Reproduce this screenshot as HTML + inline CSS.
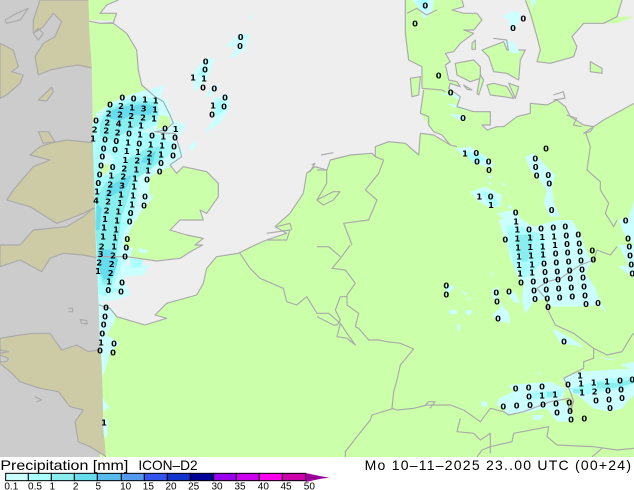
<!DOCTYPE html>
<html><head><meta charset="utf-8"><title>Precipitation ICON-D2</title>
<style>
html,body{margin:0;padding:0;background:#fff;width:634px;height:490px;overflow:hidden}
svg{display:block}
.b{fill:none;stroke:#aaa;stroke-width:3.5;stroke-linejoin:round}
.l text,text.l{font:bold 25px "DejaVu Sans",sans-serif;fill:#000;text-anchor:middle;dominant-baseline:central}
.a{fill:#ccffff}.m{fill:#aaffff}.c{fill:#88eeee}.d{fill:#66ddee}
</style></head><body>
<svg width="634" height="490" viewBox="0 0 1902 1470" xmlns="http://www.w3.org/2000/svg">
<defs>
<clipPath id="dom"><polygon points="0,0 265,0 268,100 275,200 277,300 278,420 285,600 288,735 295,885 300,1035 305,1085 308,1185 310,1285 318,1371 0,1371"/></clipPath>
<clipPath id="map"><rect width="1902" height="1371"/></clipPath>
<clipPath id="nd"><polygon points="265,0 1902,0 1902,1371 318,1371 310,1285 308,1185 305,1085 300,1035 295,885 288,735 285,600 278,420 277,300 275,200 268,100"/></clipPath>
</defs>
<g clip-path="url(#map)">
<rect width="1902" height="1371" fill="#ccffaa"/>
<!-- North Sea / Channel -->
<polygon fill="#eeeeee" points="355,0 1216,0 1216,100 1226,180 1266,200 1266,265 1271,270 1261,340 1286,375 1301,395 1326,405 1351,435 1371,440 1301,405 1261,400 1256,465 1216,430 1166,425 1126,440 1126,470 1116,460 1051,465 991,480 981,510 945,500 920,520 910,580 870,640 825,680 860,700 800,720 765,735 715,760 650,770 620,805 610,850 590,885 500,910 465,945 500,955 435,975 350,950 330,925 300,910 270,905 270,770 380,770 470,783 540,775 580,750 608,735 585,735 610,715 560,705 510,690 540,660 610,660 600,630 620,640 655,590 655,550 620,515 550,500 530,520 510,495 545,470 540,450 525,400 500,400 465,395 495,390 520,370 510,345 490,305 465,290 425,255 415,210 410,150 380,100 340,70 300,70 250,60 250,60 340,62 350,40 300,40 320,15"/>
<!-- Baltic -->
<polygon fill="#eeeeee" points="1386,0 1391,20 1356,30 1391,40 1431,40 1446,60 1421,90 1391,90 1421,100 1381,130 1361,155 1336,160 1351,185 1336,195 1341,215 1346,240 1371,245 1381,260 1351,250 1346,265 1381,290 1371,320 1421,335 1471,335 1471,375 1446,375 1461,390 1491,380 1511,380 1551,350 1591,340 1591,310 1641,315 1671,300 1696,320 1711,350 1751,375 1781,380 1771,395 1751,400 1811,360 1902,310 1902,50 1851,70 1811,70 1751,70 1716,110 1731,140 1721,170 1651,190 1611,185 1621,150 1611,110 1591,40 1576,0"/>
<polygon fill="#eeeeee" points="1866,0 1902,0 1902,50 1851,50"/>
<!-- Danish islands -->
<g class="b" style="fill:#ccffaa">
<polygon points="1366,190 1421,180 1441,200 1441,235 1411,245 1371,225"/>
<polygon points="1446,150 1511,125 1521,150 1576,150 1561,180 1556,240 1521,220 1481,215 1466,170"/>
<polygon points="1461,255 1481,250 1521,260 1541,295 1511,290 1471,285"/>
<polygon points="1526,250 1556,260 1546,295"/>
<polygon points="1771,185 1806,205 1806,220 1771,215"/>
<polygon points="1416,130 1426,120 1426,148 1416,148"/>
<polygon points="1441,225 1451,240 1436,285 1431,280"/>
<polygon points="1391,255 1416,270 1401,268"/>
<polygon points="1231,235 1261,230 1256,285 1236,290"/>
</g>
<!-- Out-of-domain grey + tan -->
<g clip-path="url(#dom)">
<rect width="300" height="1371" fill="#cccccc"/>
<g fill="#cdcaa6" stroke="#aaa" stroke-width="3.5" stroke-linejoin="round">
<polygon points="120,0 100,60 100,100 130,80 160,40 185,65 165,110 130,130 105,170 115,225 150,210 200,200 235,195 280,205 300,205 300,0"/>
<polygon points="0,130 40,150 55,200 35,215 70,225 60,250 20,285 0,295"/>
<polygon points="300,430 200,420 150,430 120,440 90,465 150,480 100,500 40,570 20,600 90,620 170,670 200,660 250,640 280,625 300,625"/>
<polygon points="0,735 60,735 100,690 200,680 250,650 280,625 300,625 300,775 250,765 190,760 150,775 125,815 60,780 0,800"/>
<polygon points="0,1015 60,1005 100,1000 150,1000 185,1050 230,1035 265,1055 320,1045 320,1371 270,1340 235,1325 225,1265 250,1230 210,1220 175,1175 120,1165 60,1145 30,1115 0,1090"/>
</g>
<g class="b">
<polyline points="15,60 50,40 85,25 60,60 20,70 15,60"/>
<polyline points="100,100 115,85 130,100 115,120 100,100"/>
<polygon points="115,300 155,262 160,275 140,303" fill="#cdcaa6"/>
<polygon points="115,395 145,395 165,425 130,430" fill="#cdcaa6"/>
<polyline points="205,925 218,925 218,935 205,935"/>
<polyline points="240,958 260,962 262,972 245,970 240,958"/>
<polyline points="0,1050 25,1055 0,1060"/>
<polyline points="105,1190 125,1200 110,1205"/>
<polygon points="0,1065 25,1075 20,1085 0,1085" fill="#cccccc"/>
</g>
</g>
<!-- precipitation (sea+land) -->
<g clip-path="url(#nd)">
<polygon class="a" points="280,370 290,340 340,305 400,280 460,265 495,255 480,290 500,300 520,360 560,375 530,420 555,460 520,495 450,530 445,580 460,590 420,640 390,690 370,735 400,745 390,775 380,795 450,795 430,825 370,830 390,885 350,900 300,905 340,925 345,960 320,1005 360,1030 330,1055 320,1095 305,1135 295,1000 280,800"/>
<polygon fill="#ccffaa" points="478,345 508,350 512,378 470,388"/>
<polygon class="a" points="305,1190 330,1225 320,1225 310,1235"/>
<polygon class="a" points="305,1245 325,1265 320,1315 310,1305"/>
<polygon class="a" points="415,745 440,748 440,760 420,758"/>
<polygon class="a" points="565,440 590,420 585,440 575,455"/>
<polygon class="m" points="280,375 330,315 410,290 470,295 478,340 468,375 420,395 480,405 530,440 480,490 420,520 410,590 400,650 370,700 360,760 365,790 340,860 360,870 310,890 295,880 280,700"/>
<polygon class="m" points="390,775 430,780 425,800 395,805"/>
<polygon class="a" points="296,468 330,458 342,478 326,520 300,532"/>
<polygon fill="#ccffaa" points="302,498 325,490 330,510 305,528"/>
<polygon class="c" points="300,370 330,325 400,305 470,305 475,345 420,375 380,395 340,420 300,410"/>
<polygon class="c" points="380,480 440,445 480,440 490,470 450,510 400,540 385,590 365,650 345,795 335,850 310,855 295,815 290,735 285,660 290,590 320,545 370,510"/>
<polygon class="d" points="335,330 380,318 440,312 468,322 450,345 400,345 360,362 330,355"/>
<polygon class="d" points="432,470 468,453 458,488 422,488"/>
<polygon class="d" points="325,560 370,535 395,525 378,565 340,585 315,595"/>
<polygon class="d" points="290,610 305,625 298,690 288,690"/>
<polygon class="d" points="295,745 335,750 355,780 340,830 312,840 297,805"/>
<!-- north sea blobs -->
<polygon class="a" points="750,50 765,42 745,62"/>
<polygon class="a" points="675,140 720,100 750,105 735,150 685,180 710,140"/>
<polygon class="a" points="575,225 615,175 645,175 620,240 585,275"/>
<polygon class="m" points="600,205 625,200 610,230 595,225"/>
<polygon class="a" points="615,290 640,255 660,255 630,290"/>
<polygon class="a" points="610,400 640,360 640,295 685,280 690,320 660,370"/>
<polygon class="m" points="645,305 675,300 670,335 645,350"/>
<!-- denmark / germany blobs z2 -->
<g transform="translate(951,0)">
<polygon class="a" points="285,0 350,0 345,40 320,55 310,30"/>
<polygon class="m" points="300,0 335,0 330,30 315,30"/>
<polygon class="a" points="640,0 658,0 645,25"/>
<polygon class="a" points="555,50 580,35 605,35 610,50 600,75 580,100 575,60"/>
<polygon class="a" points="560,120 590,125 610,160 580,158"/>
<polygon class="a" points="365,280 425,280 430,305 410,290"/>
<polygon class="a" points="390,310 420,315 450,325 405,320"/>
<polygon class="a" points="395,342 440,345 450,360 430,362"/>
<polygon class="a" points="415,445 460,440 500,465 530,490 525,505 490,495 450,470 430,460"/>
<polygon class="m" points="440,455 480,460 510,480 470,490"/>
<polygon class="a" points="625,470 650,460 680,490 715,525 705,560 710,610 730,650 700,650 680,610 690,570 665,535 640,510"/>
<polygon class="a" points="460,575 505,560 555,585 550,620 520,625 480,600"/>
<polygon class="m" points="490,570 530,585 545,615 520,620"/>
<polygon class="a" points="510,525 525,530 520,540"/>
<polygon class="a" points="550,548 565,552 560,560"/>
<polygon class="a" points="510,545 525,548 520,555"/>
<polygon class="a" points="572,610 590,625 575,625"/>
<polygon class="a" points="540,640 590,630 610,650 570,665"/>
</g>
<g transform="translate(951,735)">
<polygon class="a" points="545,-75 600,-85 650,-55 720,-75 765,-75 790,-35 800,0 825,50 805,85 835,130 850,170 870,205 845,180 800,185 700,185 690,160 650,170 625,205 615,165 620,120 600,90 580,40 570,0"/>
<polygon class="m" points="570,-60 610,-55 680,-30 685,40 650,80 620,100 590,60 575,0"/>
<polygon class="c" points="600,-30 650,-30 640,25 620,40 600,20"/>
<polygon class="c" points="610,30 640,25 630,50 615,50"/>
<polygon class="a" points="905,-75 935,-85 951,-135 951,0 920,-35"/>
<polygon class="a" points="905,0 951,0 951,100 905,65 935,60"/>
<polygon class="a" points="385,120 415,125 390,150"/>
<polygon class="a" points="430,135 450,145 445,152"/>
<polygon class="a" points="450,158 462,160 458,168"/>
<polygon class="a" points="395,195 420,195 420,208 395,208"/>
<polygon class="a" points="445,195 465,195 460,212 445,205"/>
<polygon class="a" points="420,238 430,238 428,258 422,258"/>
<polygon class="a" points="525,135 545,125 545,165 575,205 580,235 545,230 525,210 555,185 530,160"/>
<polygon class="a" points="570,130 595,145 610,175 590,170 575,150"/>
<polygon class="a" points="705,250 735,265 780,290 800,308 770,300 730,295"/>
<polygon class="a" points="520,80 530,85 528,95"/>
<polygon class="a" points="840,335 900,345 880,345"/>
<polygon class="a" points="910,360 951,350 951,375"/>
<polygon class="a" points="660,382 672,384 668,390"/>
<polygon class="a" points="575,420 700,410 745,430 735,465 760,490 770,530 720,530 690,490 640,500 580,510 540,480 545,460 590,440"/>
<polygon class="a" points="735,400 790,380 951,370 951,450 930,470 915,490 880,500 830,490 780,450 755,440"/>
<polygon class="a" points="490,470 510,470 510,485 495,485"/>
<polygon class="a" points="645,510 680,510 670,525 650,525"/>
<polygon class="m" points="640,440 690,440 740,435 730,455 640,465"/>
<polygon class="m" points="760,430 830,410 880,400 951,395 930,430 860,440 800,450"/>
<polygon class="c" points="840,410 900,415 951,400 951,415 880,430 840,430"/>
<polygon class="c" points="765,432 800,430 795,445 770,445"/>
<polygon class="c" points="690,440 715,440 705,455 690,455"/>
</g>
</g>
<!-- coast + borders -->
<g clip-path="url(#nd)">
<polyline class="b" points="355,0 320,15 300,40 350,40 340,68 300,70 250,60 300,70 340,70 380,100 410,150 415,210 425,255 465,290 490,305 510,345 520,370 495,390 465,395 500,400 525,400 540,450 545,470 510,495 530,520 550,500 620,515 655,550 655,590 620,640 600,630 610,660 540,660 510,690 560,705 610,715 585,735 608,735 580,750 540,775 470,783 380,770 290,770"/>
<polyline class="b" points="280,910 330,925 350,950 435,975 500,955 465,945 500,910 590,885 610,850 620,805 650,770 715,760 765,735 800,720 860,700 825,680 870,640 910,580 920,520 945,500 981,510 991,480 1051,465 1116,460 1126,470 1126,440 1166,425 1216,430 1256,465 1261,400 1301,405 1351,435 1371,440"/>
<polyline class="b" points="1216,0 1216,100 1226,180 1266,200 1266,265 1326,270 1336,275"/>
<polyline class="b" points="1271,270 1261,340 1286,350 1286,375 1301,395 1326,405 1351,435"/>
<polyline class="b" points="1386,0 1391,20 1356,30 1391,40 1431,40 1446,60 1421,90 1391,90 1421,100 1381,130 1361,155 1336,160 1351,185 1336,195 1341,215 1346,240 1371,245 1381,260 1351,250 1346,265 1381,290 1371,320 1421,335 1471,335 1471,375 1446,375 1461,390 1491,380 1511,380 1551,350 1591,340 1591,310 1641,315 1671,300 1696,320 1711,350 1751,375 1781,380 1771,395 1751,400 1811,360 1902,310"/>
<polyline class="b" points="1576,0 1591,40 1611,110 1621,150 1611,185 1651,190 1721,170 1731,140 1716,110 1751,70 1811,70 1851,50 1866,0"/>
<polyline class="b" points="1221,40 1250,25 1280,45 1310,30"/>
<polyline class="b" points="1480,115 1520,120 1525,150"/>
<polyline class="b" points="1660,285 1690,275 1695,295 1660,300"/>
<polyline class="b" points="1700,345 1730,355 1720,375 1745,380"/>
<polyline class="b" points="935,495 945,490 930,515 925,515"/>
<polyline class="b" points="950,600 1000,575 1020,575 1000,600 970,615 950,600"/>
<polyline class="b" points="951,510 980,510 980,550 951,600"/>
<polyline class="b" points="963,465 1000,458"/>
<polyline class="b" points="800,700 870,690 860,720 800,720"/>
<polyline class="b" points="830,680 870,670 875,690"/>
<polyline class="b" points="1126,470 1151,480 1136,520 1096,570 1131,600 1106,660 1031,670 1056,735"/>
<polyline class="b" points="1756,395 1771,440 1761,510 1801,545 1801,570 1826,610 1816,640 1841,680 1851,660"/>
<polyline class="b" points="720,760 750,805 780,835 850,865 860,905 890,915 920,890 951,940 986,940 1021,970 1011,1010 1041,1015 1066,1035 1041,1000 1021,970"/>
<polyline class="b" points="1051,735 1021,775 996,805 1036,810 1066,850 1041,885 1041,915 1076,940 1066,980"/>
<polyline class="b" points="1041,890 1021,890 1006,930 1021,960 1011,975 1000,975 951,950"/>
<polyline class="b" points="951,740 986,740 1021,770"/>
<polyline class="b" points="1066,980 1076,985 1106,1020 1136,1020 1161,1025 1201,1030 1241,1047 1201,1095 1191,1140 1181,1175 1176,1225 1191,1230 1241,1225 1281,1215 1351,1215 1391,1230 1441,1265 1471,1225 1511,1235 1526,1245 1571,1235 1651,1205 1708,1195 1716,1205 1711,1235"/>
<polyline class="b" points="1276,1215 1286,1205 1305,1205 1290,1225"/>
<polyline class="b" points="1641,925 1666,975 1721,1000 1781,1045 1781,1075 1751,1085 1751,1105 1691,1135 1711,1175 1721,1205 1711,1235 1700,1200"/>
<polyline class="b" points="1781,780 1791,750 1831,765 1851,740"/>
<polyline class="b" points="1781,780 1741,795 1681,835 1641,845 1611,865 1641,900 1644,925"/>
<polyline class="b" points="1781,1045 1821,1065 1866,1055 1896,1005 1902,1000"/>
<polyline class="b" points="1181,1225 1116,1245 1111,1260 1071,1310 1036,1355 1036,1371"/>
<polyline class="b" points="1381,1255 1371,1295 1421,1300 1441,1320 1471,1300 1471,1360"/>
<polyline class="b" points="1431,1371 1446,1350 1471,1340 1536,1325 1541,1300 1646,1280 1641,1310 1671,1335 1781,1340 1851,1350 1902,1345"/>
<polyline class="b" points="1776,1371 1806,1345"/>
</g>
<!-- labels z1 -->
<g class="l">
<text x="367 401 435 467" y="292 296 299 301">0011</text>
<text x="330 363 396 431 465" y="314 318 323 325 329">02131</text>
<text x="326 360 394 429 462" y="341 344 348 352 355">22221</text>
<text x="288 322 356 390 423 495 527" y="362 368 371 374 377 385 387">0241101</text>
<text x="284 319 353 387 420 456 490 525" y="388 391 397 400 404 407 409 413">22201010</text>
<text x="279 315 349 384 418 452 486 522" y="415 419 423 427 431 434 436 439">10010110</text>
<text x="311 345 380 414 449 483 519" y="445 449 453 456 461 463 466">0011210</text>
<text x="307 376 412 447 483" y="470 480 481 485 489">01210</text>
<text x="303 338 373 409 444 479" y="497 501 505 509 512 514">002110</text>
<text x="299 334 370 405 441" y="523 527 529 535 538">01210</text>
<text x="295 331 366 402" y="549 554 556 560">0231</text>
<text x="291 327 363 399 435" y="575 579 583 587 590">12110</text>
<text x="288 324 360 396 432" y="601 605 609 613 617">42110</text>
<text x="320 355 392" y="631 635 639">210</text>
<text x="315 351 389" y="657 661 665">110</text>
<text x="312 348" y="683 688">11</text>
<text x="309 345 382" y="710 712 717">110</text>
<text x="305 342 379" y="739 740 743">210</text>
<text x="302 339 375" y="762 766 770">320</text>
<text x="298 335" y="787 792">22</text>
<text x="294 332" y="813 819">12</text>
<text x="327 366" y="845 848">10</text>
<text x="325 363" y="870 874">00</text>
<text x="318 315 311 307 303 342 300 339" y="922 949 974 1000 1027 1030 1052 1057">00001000</text>
<text x="312" y="1267">1</text>
<text x="722 720 617 615 579 612 609 643 675 639 672 636" y="111 138 184 209 233 235 262 265 292 316 319 343">000011000100</text>
</g>
<g class="l" transform="translate(951,0)">
<text x="325 294 619 588 365 401 438" y="16 70 55 84 226 277 354">0000000</text>
<text x="444 478 480 515 516" y="460 459 484 484 510">10000</text>
<text x="687 655 656 659 694 697" y="446 475 501 526 525 551">000000</text>
<text x="487 521 522 596 704" y="590 590 615 637 630">10100</text>
<text x="597 926 601 636 672 709 745 784" y="664 662 689 688 685 682 679 703">10100000</text>
<text x="565 601 639 676 711 748 933" y="718 715 713 711 709 707 715">0111100</text>
<text x="787 750 714" y="730 732 735">001</text>
</g>
<g class="l" transform="translate(951,735)">
<text x="603 640 677 937" y="8 6 4 5">1110</text>
<text x="606 642 678 716 752 789 826 939" y="34 32 29 26 22 19 16 31">11100000</text>
<text x="606 645 681 718 755 792 829 943" y="60 58 55 52 49 46 43 58">11000000</text>
<text x="609 645 684 721 758 795 946" y="86 83 81 79 76 73 85">1100000</text>
<text x="612 649 686 723 760 798" y="113 110 107 104 101 98">000000</text>
<text x="388 388 538 576 651 688 725 763 801" y="121 148 142 140 136 133 130 127 124">000000000</text>
<text x="540 654 691 728 766 804 807 843 693" y="169 162 160 157 154 151 177 174 186">000000000</text>
<text x="543 741" y="221 289">00</text>
<text x="789 753 792 830 870 909 946" y="392 419 416 413 410 407 404">1011100</text>
<text x="596 635 675 795 833 873 912" y="430 427 425 442 440 436 433">0001200</text>
<text x="636 675 714 837 876 915" y="454 452 449 466 463 459">011000</text>
<text x="559 599 639 678 717 757 879" y="484 481 480 478 475 472 489">0000000</text>
<text x="720 759 762 802" y="502 498 524 521">0000</text>
</g>
</g>
<!-- footer -->
<rect y="1371" width="1902" height="99" fill="#fff"/>
<text x="1" y="1410" font-family="Liberation Sans,sans-serif" font-size="42" fill="#000" textLength="384" lengthAdjust="spacingAndGlyphs">Precipitation [mm]</text>
<text x="415" y="1410" font-family="Liberation Sans,sans-serif" font-size="42" fill="#000" textLength="178" lengthAdjust="spacingAndGlyphs">ICON–D2</text>
<text x="1094" y="1410" font-family="Liberation Sans,sans-serif" font-size="42" fill="#000" textLength="799" lengthAdjust="spacing">Mo 10–11–2025 23..00 UTC (00+24)</text>
<g stroke="#000" stroke-width="3">
<rect x="17" y="1420" width="68" height="22" fill="#ccffff"/>
<rect x="85" y="1420" width="69" height="22" fill="#aaffff"/>
<rect x="154" y="1420" width="69" height="22" fill="#88eeee"/>
<rect x="223" y="1420" width="69" height="22" fill="#66ddee"/>
<rect x="292" y="1420" width="72" height="22" fill="#55bbee"/>
<rect x="364" y="1420" width="69" height="22" fill="#5599ee"/>
<rect x="433" y="1420" width="69" height="22" fill="#3355ee"/>
<rect x="502" y="1420" width="69" height="22" fill="#1133cc"/>
<rect x="571" y="1420" width="70" height="22" fill="#000099"/>
<rect x="641" y="1420" width="68" height="22" fill="#9900ee"/>
<rect x="709" y="1420" width="69" height="22" fill="#cc00ee"/>
<rect x="778" y="1420" width="69" height="22" fill="#ff00ee"/>
<rect x="847" y="1420" width="70" height="22" fill="#cc00aa"/>
</g>
<polygon points="917,1419 945,1425 965,1429 988,1433 965,1436 945,1440 917,1446" fill="#990099"/>
<g font-family="Liberation Sans,sans-serif" font-size="30" fill="#000" text-anchor="middle">
<text x="34" y="1468">0.1</text><text x="105" y="1468">0.5</text><text x="157" y="1468">1</text><text x="227" y="1468">2</text><text x="295" y="1468">5</text><text x="377" y="1468">10</text><text x="445" y="1468">15</text><text x="513" y="1468">20</text><text x="581" y="1468">25</text><text x="651" y="1468">30</text><text x="720" y="1468">35</text><text x="790" y="1468">40</text><text x="858" y="1468">45</text><text x="928" y="1468">50</text>
</g>
</svg>
</body></html>
